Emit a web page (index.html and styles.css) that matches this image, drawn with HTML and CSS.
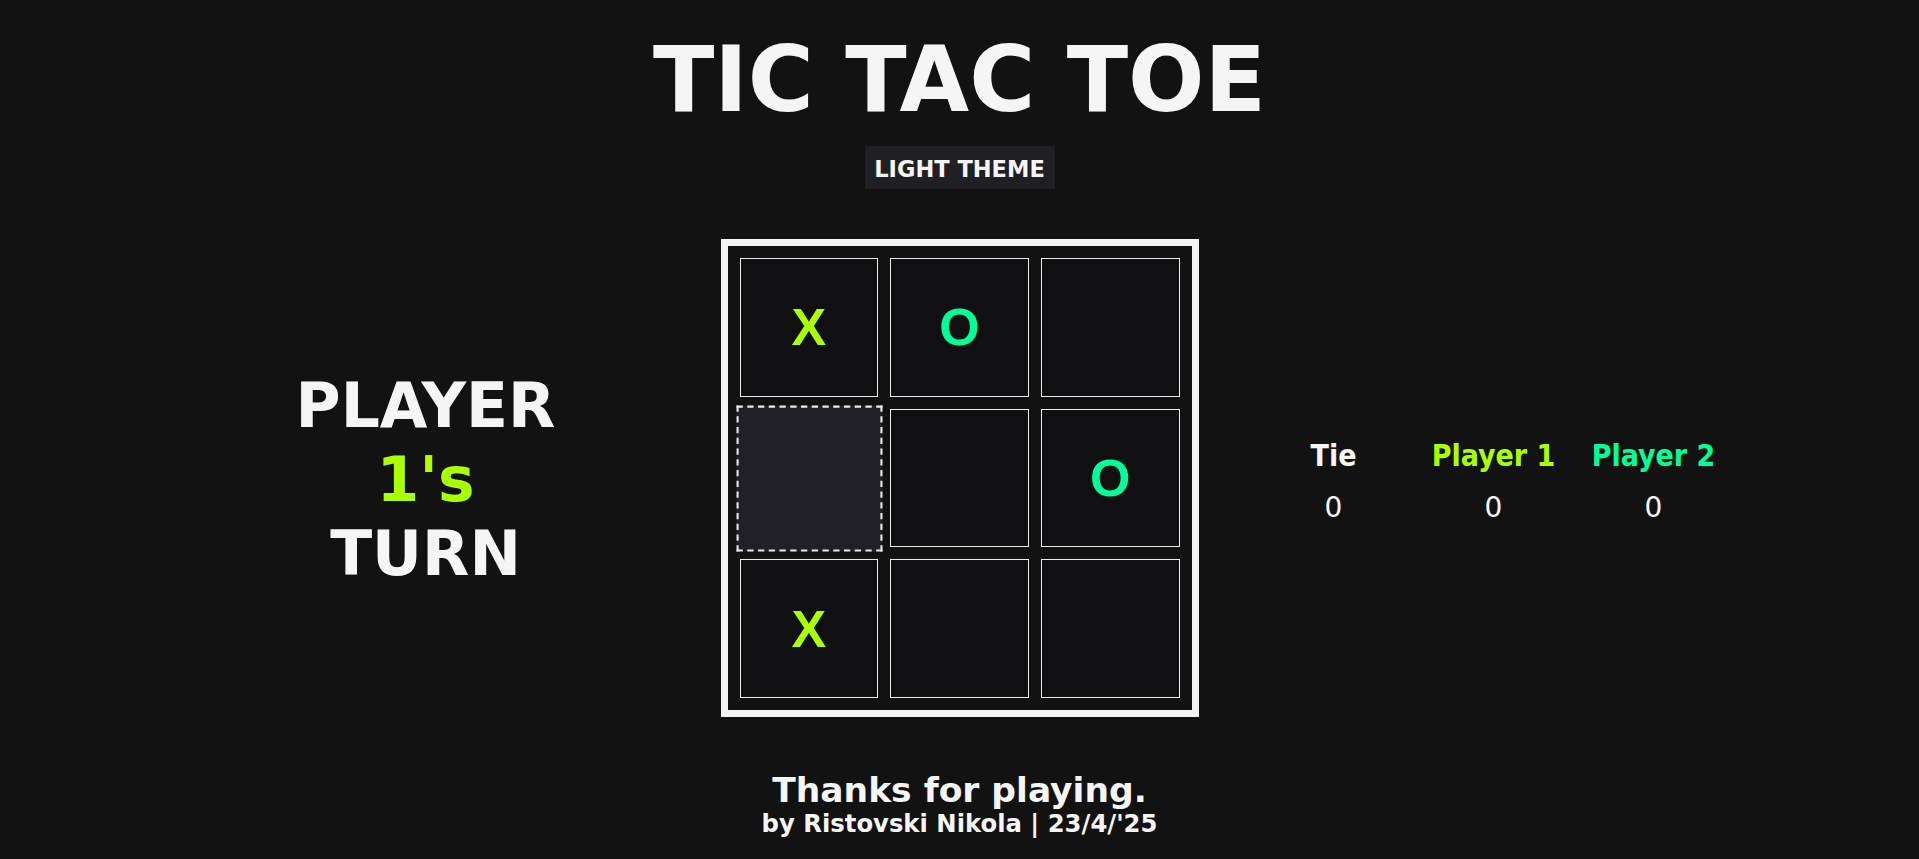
FILE: index.html
```html
<!DOCTYPE html>
<html lang="en">
<head>
<meta charset="utf-8">
<title>Tic Tac Toe</title>
<link rel="stylesheet" href="styles.css">
</head>
<body>
<header class="top">
  <h1 class="title">TIC TAC TOE</h1>
  <button class="theme-btn">LIGHT THEME</button>
</header>
<main class="game">
  <section class="turn">
    <div class="turn-line">PLAYER</div>
    <div class="turn-line turn-x">1's</div>
    <div class="turn-line">TURN</div>
  </section>
  <section class="board">
    <div class="cell x">X</div>
    <div class="cell o">O</div>
    <div class="cell"></div>
    <div class="cell hover"></div>
    <div class="cell"></div>
    <div class="cell o">O</div>
    <div class="cell x">X</div>
    <div class="cell"></div>
    <div class="cell"></div>
  </section>
  <section class="score">
    <div class="score-head">Tie</div>
    <div class="score-head p1">Player 1</div>
    <div class="score-head p2">Player 2</div>
    <div class="score-val">0</div>
    <div class="score-val">0</div>
    <div class="score-val">0</div>
  </section>
</main>
<footer class="foot">
  <div class="thanks">Thanks for playing.</div>
  <div class="credit">by Ristovski Nikola | 23/4/'25</div>
</footer>
</body>
</html>
```
FILE: styles.css
```css
html, body {
  margin: 0;
  padding: 0;
}
body {
  background: #121212;
  color: #f5f5f5;
  font-family: "DejaVu Sans", Verdana, sans-serif;
  text-align: center;
  height: 859px;
  overflow: hidden;
}
.top {
  display: flex;
  flex-direction: column;
  align-items: center;
  padding-top: 30px;
}
.title {
  margin: 0;
  font-size: 90px;
  line-height: 100px;
  font-weight: bold;
}
.theme-btn {
  box-sizing: border-box;
  margin-top: 16px;
  width: 190px;
  height: 43px;
  padding: 3px 0 0;
  background: #202024;
  color: #f5f5f5;
  border: none;
  font-family: inherit;
  font-weight: bold;
  font-size: 22.5px;
}
.game {
  display: flex;
  justify-content: center;
  align-items: center;
  gap: 55px;
  margin-top: 50px;
}
.turn {
  width: 480px;
  padding-top: 4px;
  font-weight: bold;
  font-size: 61.5px;
  line-height: 74px;
}
.turn-x {
  color: #aaff00;
}
.board {
  box-sizing: border-box;
  width: 478px;
  height: 478px;
  border: 7px solid #f5f5f5;
  padding: 12px;
  display: grid;
  grid-template-columns: repeat(3, 1fr);
  grid-template-rows: repeat(3, 1fr);
  gap: 12px;
  background: #121212;
}
.cell {
  box-sizing: border-box;
  border: 1px solid #ececec;
  background: #101012;
  display: flex;
  align-items: center;
  justify-content: center;
  font-family: "Liberation Sans", Arial, sans-serif;
  font-weight: bold;
  font-size: 52px;
}
.cell.x {
  color: #aaff00;
}
.cell.o {
  color: #00ff99;
}
.cell.hover {
  border: 2px dashed #e8e8e8;
  background: #202026;
  transform: scale(1.05);
}
.score {
  width: 480px;
  padding-top: 5px;
  display: grid;
  grid-template-columns: repeat(3, 160px);
  row-gap: 14px;
}
.score-head {
  font-family: "DejaVu Sans Condensed", "DejaVu Sans", sans-serif;
  font-stretch: condensed;
  font-weight: bold;
  font-size: 30px;
  line-height: 40px;
}
.score-head.p1 {
  color: #aaff00;
}
.score-head.p2 {
  color: #00ff99;
}
.score-val {
  font-size: 28px;
  line-height: 36px;
}
.foot {
  margin-top: 54px;
  font-weight: bold;
}
.thanks {
  font-size: 34.5px;
  line-height: 38px;
}
.credit {
  font-size: 24.3px;
  line-height: 29px;
}
```
